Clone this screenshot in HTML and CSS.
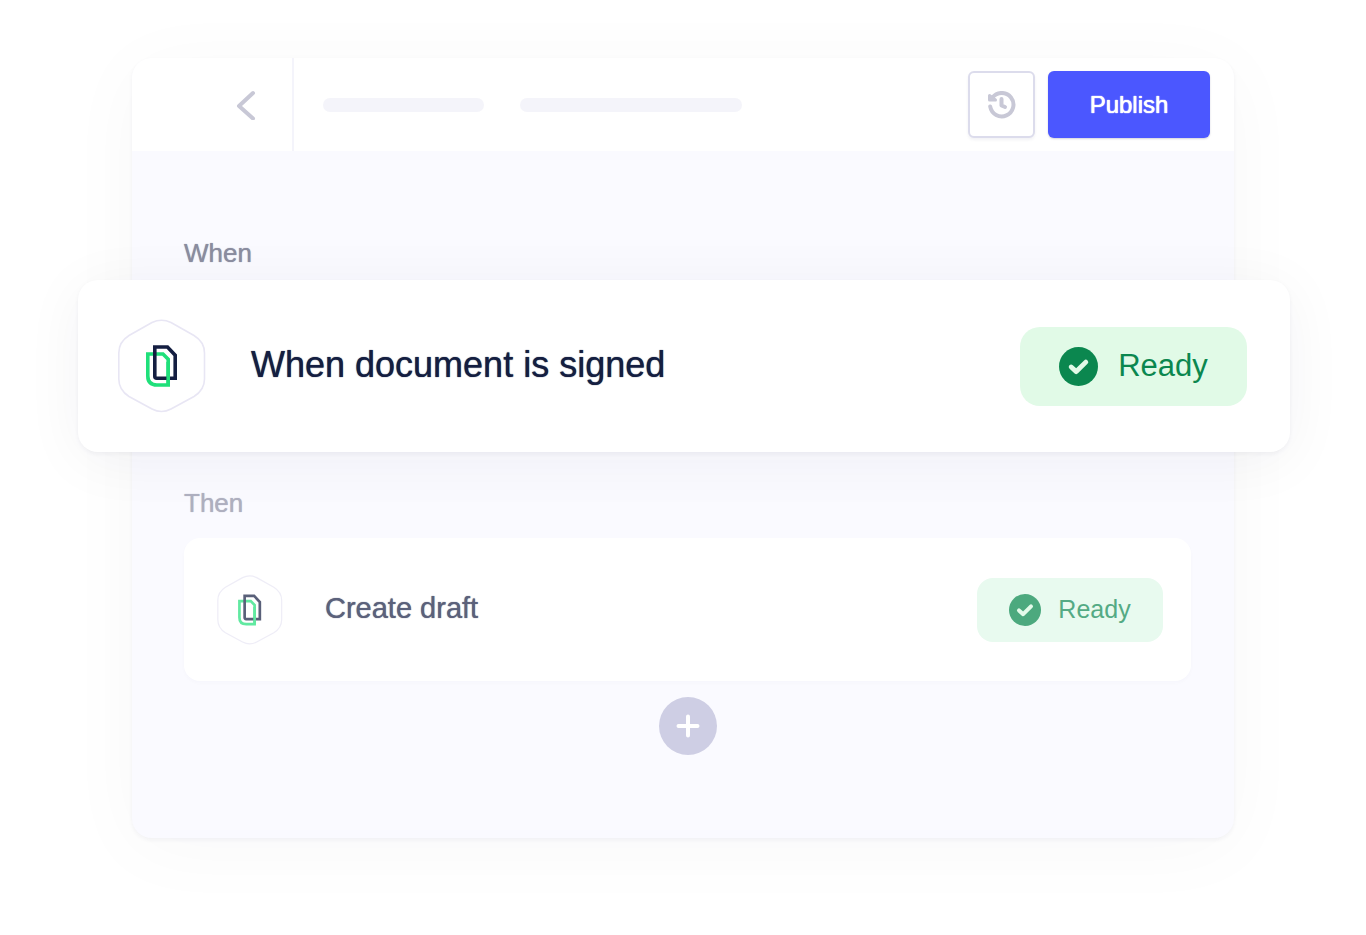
FILE: index.html
```html
<!DOCTYPE html>
<html lang="en">
<head>
  <meta charset="UTF-8" />
  <meta name="viewport" content="width=device-width, initial-scale=1.0" />
  <title>Automation</title>
  <link rel="stylesheet" href="styles.css">
</head>
<body>
  <!-- Shared icons -->
  <svg class="sprite" aria-hidden="true">
    <symbol id="icon-document" viewBox="0 0 88 94">
      <path fill="#fff" stroke="#e8e6f4" stroke-width="1.600" d="M34 3.500Q43.500 -1 53 3.500L76 16.500Q86.500 23 86.500 34V60Q86.500 71 76 77.500L53 90Q43.500 95 34 90L11 77.500Q.8 71 .8 60V34Q.8 23 11 16.500Z" />
      <path fill="none" stroke="#1fe07a" stroke-width="3.600" d="M29.800 35H45L50.200 40.200V66H39Q29.800 66 29.800 57Z" />
      <path fill="none" stroke="#141e41" stroke-width="3.600" d="M36.800 28H49.500L57.200 36.200V59.200H38.800Q36.800 59.200 36.800 57.200Z" />
      <path fill="none" stroke="#1fe07a" stroke-width="3.600" d="M50.200 43V66" />
    </symbol>
    <symbol id="icon-check" viewBox="0 0 40 40">
      <circle cx="20" cy="20" r="20" fill="#0b874f" />
      <path fill="none" stroke="#e1fae7" stroke-width="5" stroke-linecap="round" stroke-linejoin="round" d="M12.500 20.500L17.700 25.200L27.500 15.500" />
    </symbol>
  </svg>

  <main class="panel">
    <header class="toolbar">
      <button type="button" class="back" aria-label="Back">
        <svg width="20" height="30" viewBox="0 0 20 30"><path d="M17 3L3 16L17 28.500" /></svg>
      </button>
      <div class="crumbs">
        <span class="line"></span>
        <span class="line long"></span>
      </div>
      <button type="button" class="history" aria-label="History">
        <svg width="28" height="28" viewBox="0 0 28 28">
          <path d="M4.500 6.500A11.700 11.700 0 1 1 2.200 15.500" />
          <path d="M13.500 8V14.500L17 16" />
          <path class="arrow" d="M1.500 4.500L7.500 9H1.500Z" />
        </svg>
      </button>
      <button type="button" class="publish">Publish</button>
    </header>

    <div class="flow">
      <h2>When</h2>
      <section class="step trigger">
        <svg class="badge"><use href="#icon-document" /></svg>
        <h3>When document is signed</h3>
        <span class="status"><svg><use href="#icon-check" /></svg>Ready</span>
      </section>

      <h2 class="faded">Then</h2>
      <section class="step action">
        <svg class="badge"><use href="#icon-document" /></svg>
        <h3>Create draft</h3>
        <span class="status"><svg><use href="#icon-check" /></svg>Ready</span>
      </section>

      <button type="button" class="add" aria-label="Add step">
        <svg width="24" height="24" viewBox="0 0 24 24"><path d="M12 2.500V21.500M2.500 12H21.500" /></svg>
      </button>
    </div>
  </main>
</body>
</html>
```

FILE: styles.css
```css
*,
*::before,
*::after {
  box-sizing: border-box;
}

body {
  margin: 0;
  padding: 58px 132px 96px;
  background-color: #fff;
  font-family: "Liberation Sans", Arial, sans-serif;
  color: #141e41;
}

h2,
h3 {
  margin: 0;
  font-weight: 400;
  text-shadow: 0 0 1px currentColor;
}

button {
  font-family: inherit;
  padding: 0;
  border: none;
  cursor: pointer;
}

.sprite {
  position: absolute;
  width: 0;
  height: 0;
}

.panel {
  border-radius: 20px;
  background-color: #fafaff;
  box-shadow: 0 2px 4px rgba(30, 30, 80, 0.05), 0 10px 80px rgba(30, 30, 60, 0.03);
}

/* Toolbar */
.toolbar {
  display: flex;
  align-items: center;
  height: 93px;
  padding-right: 24px;
  border-radius: 20px 20px 0 0;
  background-color: #fff;
}

.back {
  display: flex;
  align-items: center;
  justify-content: flex-end;
  align-self: stretch;
  width: 162px;
  padding-right: 36px;
  border-right: 2px solid #f4f4fb;
  border-radius: 20px 0 0 0;
  background: none;
}

.toolbar svg {
  fill: none;
  stroke: #c8c8d6;
  stroke-width: 4;
  stroke-linecap: round;
  stroke-linejoin: round;
}

.crumbs {
  display: flex;
  flex: 1;
  gap: 36px;
  padding-left: 29px;
}

.line {
  width: 161px;
  height: 14px;
  border-radius: 7px;
  background-color: #f4f4fa;
}

.line.long {
  width: 222px;
}

.history {
  display: grid;
  place-items: center;
  width: 67px;
  height: 67px;
  margin-right: 13px;
  border: 2px solid #dcdcec;
  border-radius: 6px;
  background-color: #fff;
  box-shadow: 0 2px 3px rgba(30, 30, 80, 0.06);
}

.history .arrow {
  fill: #c8c8d6;
  stroke-width: 3;
}

.publish {
  width: 162px;
  height: 67px;
  border-radius: 6px;
  background-color: #4b57ff;
  box-shadow: 0 1px 2px rgba(30, 30, 80, 0.2);
  color: #fff;
  font-size: 24px;
  text-shadow: 0 0 1px #fff, 0 0 1px #fff;
}

/* Steps */
.flow {
  padding: 86px 43px 83px 52px;
}

.flow h2 {
  font-size: 26px;
  line-height: 32px;
  color: #8a8c9f;
}

.flow h2.faded {
  color: #aeafbf;
}

.step {
  display: flex;
  align-items: center;
  background-color: #fff;
}

.step h3 {
  padding-bottom: 2px;
}

.status {
  display: flex;
  align-items: center;
  justify-content: center;
  margin-left: auto;
  background-color: #e1fae7;
  color: #0b874f;
}

/* The trigger card overhangs the panel on both sides */
.trigger {
  height: 172px;
  margin: 11px -99px 35px -106px;
  padding: 0 43px 0 40px;
  border-radius: 20px;
  box-shadow: 0 2px 4px rgba(30, 30, 80, 0.05), 0 8px 60px rgba(30, 30, 60, 0.05);
}

.trigger .badge {
  width: 88px;
  height: 94px;
  margin-right: 45px;
}

.trigger h3 {
  font-size: 36px;
}

.trigger .status {
  gap: 20px;
  width: 227px;
  height: 79px;
  border-radius: 20px;
  font-size: 31px;
}

.trigger .status svg {
  width: 39px;
  height: 39px;
}

.action {
  height: 143px;
  margin: 19px 0 16px;
  padding: 0 28px 0 33px;
  border-radius: 16px;
  box-shadow: 0 2px 4px rgba(30, 30, 80, 0.02);
}

.action .badge {
  width: 66px;
  height: 70px;
  margin-right: 42px;
  opacity: 0.7;
}

.action h3 {
  font-size: 29px;
  color: #5b617b;
}

.action .status {
  gap: 17px;
  width: 186px;
  height: 64px;
  border-radius: 16px;
  background-color: #e8faef;
  color: #54aa84;
  font-size: 25px;
}

.action .status svg {
  width: 32px;
  height: 32px;
  opacity: 0.7;
}

.add {
  display: grid;
  place-items: center;
  width: 58px;
  height: 58px;
  margin: 0 auto;
  border-radius: 50%;
  background-color: #cecee4;
}

.add svg {
  stroke: #fff;
  stroke-width: 4;
  stroke-linecap: round;
}
```
